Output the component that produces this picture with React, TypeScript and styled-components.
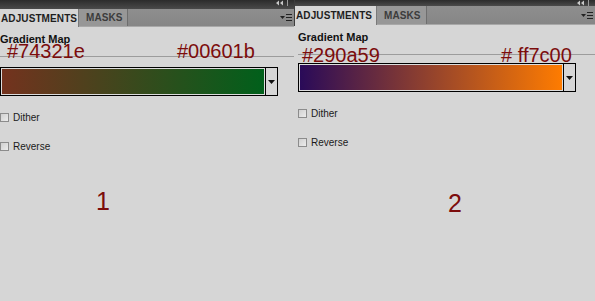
import React from "react";
import styled, { createGlobalStyle } from "styled-components";

type Sample = {
  from: string;
  to: string;
  fromLabel: string;
  toLabel: string;
  number: string;
};

const samples: Sample[] = [
  { from: "#74321e", to: "#00601b", fromLabel: "#74321e", toLabel: "#00601b", number: "1" },
  { from: "#290a59", to: "#ff7c00", fromLabel: "#290a59", toLabel: "# ff7c00", number: "2" },
];

const App: React.FC = () => {
  return (
    <>
      <GlobalStyle />
      <Screen>
        <Panel $width={294}>
          <TopStrip $height={9}>
            <StripIcons />
          </TopStrip>
          <TabBar $height={17}>
            <Tab $active $width={79}>ADJUSTMENTS</Tab>
            <Tab $width={49}>MASKS</Tab>
            <MenuIcon />
          </TabBar>
          <Body $padTop={6} $padLeft={0}>
            <PanelContent sample={samples[0]} hexStart={7} hexSpan={170} hexShift={-5} barGap={10} />
            <Note $left={96} $top={28}>1</Note>
          </Body>
        </Panel>
        <Divider />
        <Panel $width={300}>
          <TopStrip $height={6}>
            <StripIcons />
          </TopStrip>
          <TabBar $height={18}>
            <Tab $active $width={82}>ADJUSTMENTS</Tab>
            <Tab $width={50}>MASKS</Tab>
            <MenuIcon />
          </TabBar>
          <Body $padTop={6} $padLeft={3}>
            <PanelContent sample={samples[1]} hexStart={4} hexSpan={199} hexShift={1} barGap={8} />
            <Note $left={150} $top={34}>2</Note>
          </Body>
        </Panel>
      </Screen>
    </>
  );
};

const PanelContent: React.FC<{
  sample: Sample;
  hexStart: number;
  hexSpan: number;
  hexShift: number;
  barGap: number;
}> = ({ sample, hexStart, hexSpan, hexShift, barGap }) => (
  <>
    <Title>Gradient Map</Title>
    <HexRow $start={hexStart} $span={hexSpan}>
      <HexLabel $shift={hexShift}>{sample.fromLabel}</HexLabel>
      <HexLabel $shift={hexShift}>{sample.toLabel}</HexLabel>
    </HexRow>
    <GradientPicker $gap={barGap}>
      <GradientSwatch $from={sample.from} $to={sample.to} />
      <DropButton>
        <svg width="7" height="4" viewBox="0 0 7 4">
          <path d="M0 0h7L3.5 4z" fill="#111" />
        </svg>
      </DropButton>
    </GradientPicker>
    <Option>
      <Box />
      Dither
    </Option>
    <Option>
      <Box />
      Reverse
    </Option>
  </>
);

const StripIcons: React.FC = () => (
  <svg width="16" height="6" viewBox="0 0 16 6">
    <path d="M4 0.5L1 3l3 2.5zM8 0.5L5 3l3 2.5z" fill="#c8c8c8" />
    <rect x="12" y="0" width="1" height="6" fill="#9a9a9a" />
  </svg>
);

const MenuIcon: React.FC = () => (
  <MenuWrap>
    <svg width="12" height="7" viewBox="0 0 12 7">
      <path d="M0 2h5L2.5 5z" fill="#222" />
      <rect x="6" y="0" width="6" height="1" fill="#222" />
      <rect x="6" y="3" width="6" height="1" fill="#222" />
      <rect x="6" y="6" width="6" height="1" fill="#222" />
    </svg>
  </MenuWrap>
);

const GlobalStyle = createGlobalStyle`
  html, body {
    margin: 0;
    padding: 0;
    background: #d6d6d6;
  }
  body {
    font-family: "Liberation Sans", Arial, sans-serif;
  }
`;

const Screen = styled.div`
  display: flex;
  width: 595px;
  height: 301px;
  overflow: hidden;
  background: #d6d6d6;
`;

const Panel = styled.section<{ $width: number }>`
  width: ${(p) => p.$width}px;
  display: flex;
  flex-direction: column;
  flex-shrink: 0;
`;

const Divider = styled.div`
  width: 1px;
  background: linear-gradient(#3d3d3d 0 26px, #d6d6d6 26px);
`;

const TopStrip = styled.div<{ $height: number }>`
  height: ${(p) => p.$height}px;
  background: linear-gradient(#2c2c2c, #4a4a4a);
  display: flex;
  justify-content: flex-end;
  align-items: flex-start;
  padding-right: 3px;
  overflow: hidden;
`;

const TabBar = styled.div<{ $height: number }>`
  height: ${(p) => p.$height}px;
  background: linear-gradient(#8e8e8e, #868686);
  border-bottom: 1px solid #a8a8a8;
  display: flex;
  align-items: stretch;
`;

const Tab = styled.div<{ $active?: boolean; $width: number }>`
  width: ${(p) => p.$width}px;
  box-sizing: border-box;
  display: flex;
  align-items: center;
  padding-left: ${(p) => (p.$active ? 1 : 7)}px;
  font-size: 10px;
  font-weight: bold;
  letter-spacing: 0.1px;
  color: ${(p) => (p.$active ? "#1e1e1e" : "#3c3c3c")};
  background: ${(p) => (p.$active ? "#d6d6d6" : "#979797")};
  border-right: 1px solid ${(p) => (p.$active ? "#7a7a7a" : "#6e6e6e")};
  margin-bottom: ${(p) => (p.$active ? -1 : 0)}px;
`;

const MenuWrap = styled.div`
  margin-left: auto;
  padding-right: 2px;
  display: flex;
  align-items: center;
`;

const Body = styled.div<{ $padTop: number; $padLeft: number }>`
  flex: 1;
  display: flex;
  flex-direction: column;
  padding: ${(p) => p.$padTop}px 0 0 ${(p) => p.$padLeft}px;
  background: #d6d6d6;
`;

const Title = styled.div`
  font-size: 11px;
  font-weight: bold;
  line-height: 13px;
  color: #111;
`;

const HexRow = styled.div<{ $start: number; $span: number }>`
  height: 10px;
  display: grid;
  grid-template-columns: ${(p) => p.$span}px auto;
  justify-content: start;
  padding-left: ${(p) => p.$start}px;
  border-bottom: 1px solid #9c9c9c;
`;

const HexLabel = styled.span<{ $shift: number }>`
  font-size: 20px;
  line-height: 20px;
  height: 20px;
  white-space: nowrap;
  margin-top: ${(p) => p.$shift}px;
  color: #7c0c0c;
  position: relative;
`;

const GradientPicker = styled.div<{ $gap: number }>`
  width: 278px;
  height: 29px;
  margin-top: ${(p) => p.$gap}px;
  display: flex;
`;

const GradientSwatch = styled.div<{ $from: string; $to: string }>`
  flex: 1;
  border: 1px solid #000;
  box-shadow: inset 0 0 0 1px #dcdcdc;
  background: linear-gradient(to right, ${(p) => p.$from}, ${(p) => p.$to});
`;

const DropButton = styled.div`
  width: 11px;
  border: 1px solid #000;
  border-left: none;
  background: #d6d6d6;
  display: flex;
  align-items: center;
  justify-content: center;
`;

const Option = styled.label`
  display: flex;
  align-items: center;
  gap: 4px;
  height: 29px;
  font-size: 10px;
  color: #1a1a1a;
  &:first-of-type {
    margin-top: 7px;
  }
`;

const Box = styled.span`
  width: 9px;
  height: 9px;
  box-sizing: border-box;
  border: 1px solid #8c8c8c;
  background: linear-gradient(135deg, #d0d0d0, #ececec);
`;

const Note = styled.div<{ $left: number; $top: number }>`
  margin: ${(p) => p.$top}px 0 0 ${(p) => p.$left}px;
  font-size: 25px;
  line-height: 25px;
  color: #7c0c0c;
`;

export default App;
